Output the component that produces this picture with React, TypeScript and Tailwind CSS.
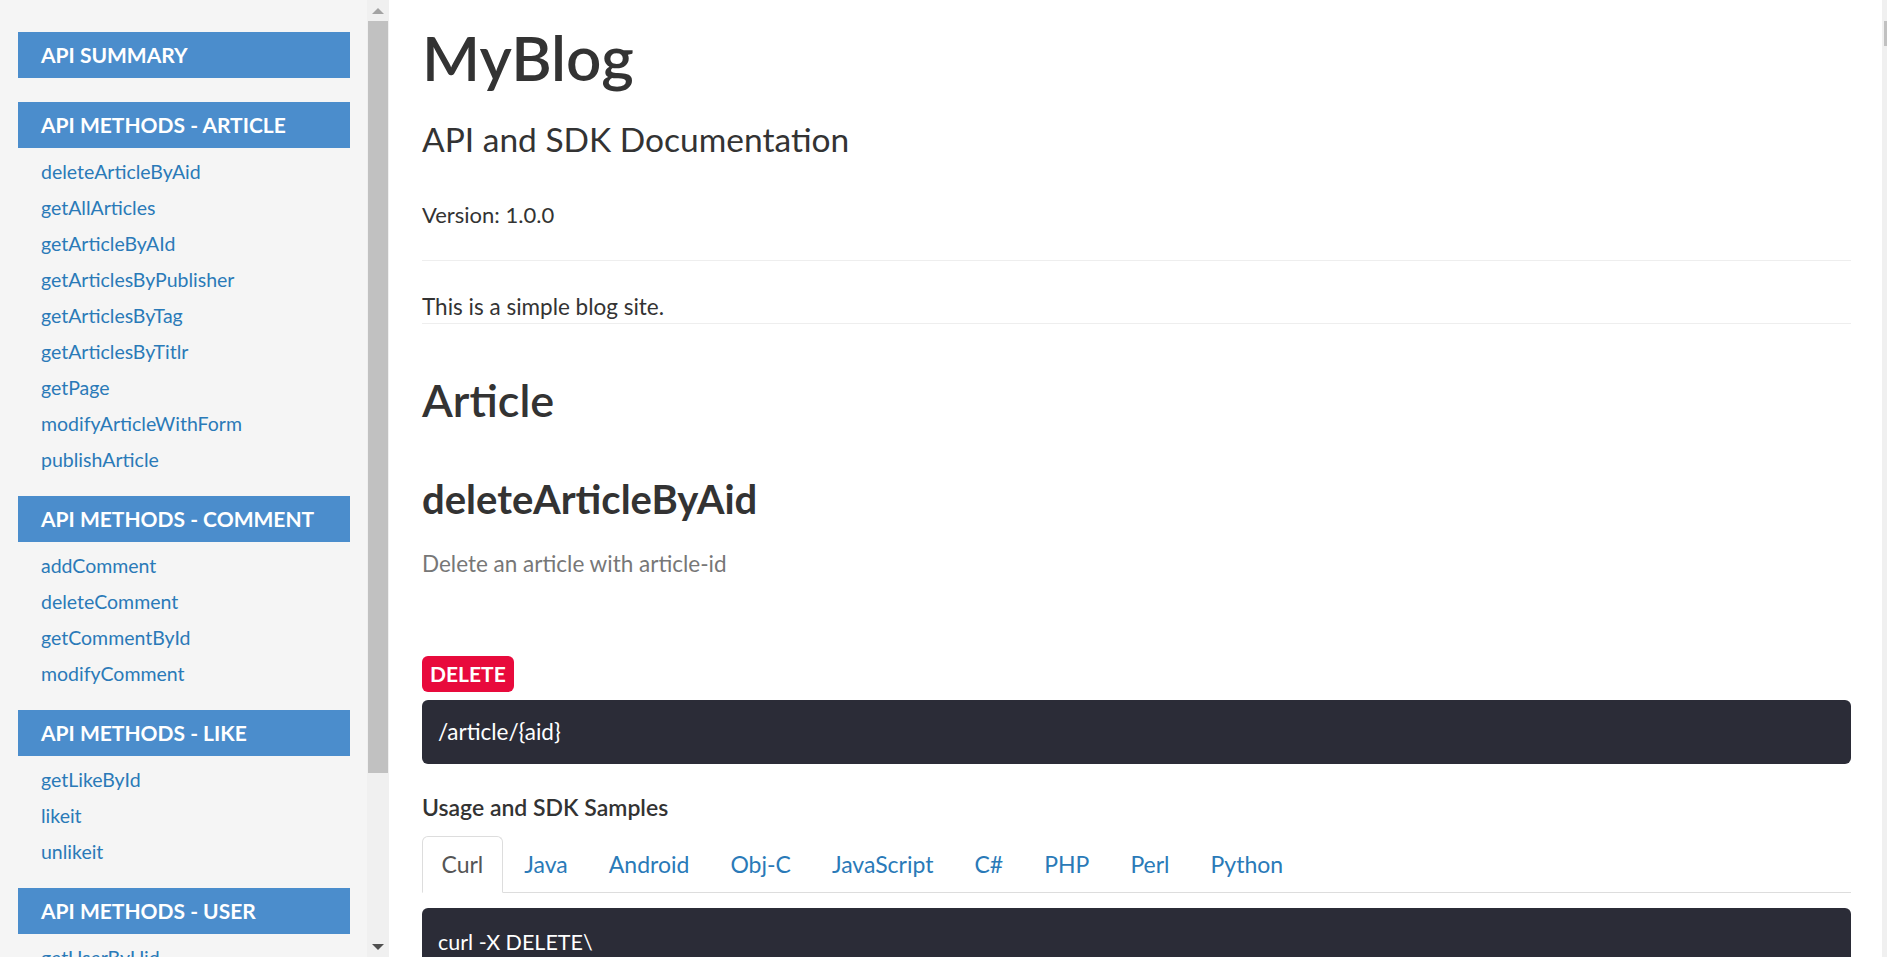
import React from 'react';

const groups = [
  { title: 'API SUMMARY', links: [] as string[] },
  {
    title: 'API METHODS - ARTICLE',
    links: [
      'deleteArticleByAid',
      'getAllArticles',
      'getArticleByAId',
      'getArticlesByPublisher',
      'getArticlesByTag',
      'getArticlesByTitlr',
      'getPage',
      'modifyArticleWithForm',
      'publishArticle',
    ],
  },
  {
    title: 'API METHODS - COMMENT',
    links: ['addComment', 'deleteComment', 'getCommentById', 'modifyComment'],
  },
  { title: 'API METHODS - LIKE', links: ['getLikeById', 'likeit', 'unlikeit'] },
  { title: 'API METHODS - USER', links: ['getUserByUid', 'login', 'logout'] },
];

const tabs = ['Curl', 'Java', 'Android', 'Obj-C', 'JavaScript', 'C#', 'PHP', 'Perl', 'Python'];

const Sidebar: React.FC = () => (
  <div className="w-[389px] h-screen flex shrink-0 bg-[#f5f5f5]">
    <div className="flex-1 overflow-hidden pl-[18px] pr-[17px] pt-[32px]">
      {groups.map((g, i) => (
        <div key={g.title} className={i === 0 ? 'mb-[24px]' : 'mb-[19px]'}>
          <div className="h-[46px] flex items-center px-[23px] bg-[#4b8dcc] text-white font-bold text-[21px]">
            {g.title}
          </div>
          {g.links.length > 0 && (
            <ul className="mt-[5px]">
              {g.links.map((l) => (
                <li key={l} className="h-[36px] flex items-center pl-[23px] pt-[1px] text-[19.5px] text-[#2a7ab8]">
                  {l}
                </li>
              ))}
            </ul>
          )}
        </div>
      ))}
    </div>
    {/* sidebar scrollbar */}
    <div className="w-[22px] h-full flex flex-col bg-[#f0f0f0] shrink-0">
      <div className="h-[21px] flex items-center justify-center">
        <div className="w-0 h-0 border-l-[6px] border-r-[6px] border-b-[6px] border-l-transparent border-r-transparent border-b-[#a3a3a3]" />
      </div>
      <div className="mx-[1px] h-[752px] bg-[#c1c1c1]" />
      <div className="flex-1" />
      <div className="h-[21px] flex items-center justify-center">
        <div className="w-0 h-0 border-l-[6px] border-r-[6px] border-t-[6px] border-l-transparent border-r-transparent border-t-[#505050]" />
      </div>
    </div>
  </div>
);

const App: React.FC = () => {
  return (
    <div className="flex h-screen overflow-hidden bg-white font-[Lato,sans-serif] text-[#333]">
      <Sidebar />

      <main className="flex-1 h-full overflow-hidden pl-[33px] pr-[31px] pt-[23px]">
        <h1 className="text-[62px] leading-[68px] font-semibold">MyBlog</h1>
        <h2 className="mt-[28px] text-[33.5px] leading-[40px]">API and SDK Documentation</h2>
        <p className="mt-[42px] text-[22px] leading-[28px]">Version: 1.0.0</p>
        <hr className="mt-[31px] border-t border-[#eee]" />
        <div className="mt-[32px] pb-[2px] border-b border-[#eee] text-[22.5px] leading-[28px]">
          This is a simple blog site.
        </div>

        <h1 className="mt-[50px] text-[45px] leading-[52px] font-semibold">Article</h1>
        <h2 className="mt-[49px] text-[40px] leading-[48px] font-bold">deleteArticleByAid</h2>
        <p className="mt-[27px] text-[22.5px] leading-[28px] text-[#777]">Delete an article with article-id</p>

        <div className="mt-[78px] flex">
          <span className="h-[36px] px-[8px] flex items-center rounded-[6px] bg-[#e80a3c] text-white font-bold text-[21px]">
            DELETE
          </span>
        </div>
        <div className="mt-[8px] h-[64px] flex items-center px-[16px] rounded-[6px] bg-[#2b2c37] text-white text-[22.5px]">
          /article/{'{aid}'}
        </div>

        <h3 className="mt-[28px] text-[23px] leading-[30px] font-semibold">Usage and SDK Samples</h3>

        <ul className="mt-[14px] flex border-b border-[#ddd]">
          {tabs.map((t, i) => (
            <li
              key={t}
              className={`-mb-px mr-[2px] h-[57px] flex items-center px-[18.5px] text-[23px] rounded-t-[6px] border ${
                i === 0 ? 'border-[#ddd] border-b-white bg-white text-[#555]' : 'border-transparent text-[#2a7ab8]'
              }`}
            >
              {t}
            </li>
          ))}
        </ul>

        <div className="mt-[15px] h-[120px] px-[16px] pt-[18px] rounded-t-[6px] bg-[#2b2c37] text-white text-[21.5px] leading-[32px]">
          curl -X DELETE\
        </div>
      </main>

      {/* page scrollbar */}
      <div className="w-[5px] h-full bg-[#f0f0f0] shrink-0 pt-[21px]">
        <div className="ml-[2px] h-[25px] bg-[#c1c1c1]" />
      </div>
    </div>
  );
};

export default App;
